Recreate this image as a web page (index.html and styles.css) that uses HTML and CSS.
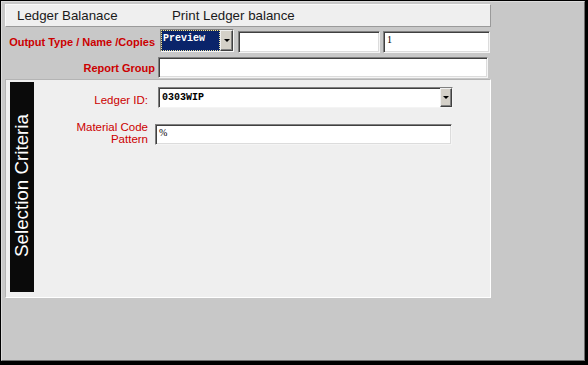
FILE: index.html
```html
<!DOCTYPE html>
<html>
<head>
<meta charset="utf-8">
<link rel="stylesheet" href="styles.css">
</head>
<body>
<div class="window">
  <div class="inner">
    <div class="titlebar">
      <span class="title-main">Ledger Balanace</span>
      <span class="title-sub">Print Ledger balance</span>
    </div>
    <div class="row row-output">
      <div class="lbl">Output Type / Name /Copies</div>
      <div class="combo combo-preview">
        <div class="combo-value focused"><span>Preview</span></div>
        <div class="combo-btn"><i class="arrow"></i></div>
      </div>
      <div class="field field-name"></div>
      <div class="field field-copies"><span>1</span></div>
    </div>
    <div class="row row-group">
      <div class="lbl">Report Group</div>
      <div class="field field-group"></div>
    </div>
    <div class="panel">
      <div class="sidebar"><span>Selection Criteria</span></div>
      <div class="criteria">
        <div class="crow crow-ledger">
          <div class="clbl">Ledger ID:</div>
          <div class="combo combo-ledger">
            <div class="combo-value"><span>0303WIP</span></div>
            <div class="combo-btn"><i class="arrow"></i></div>
          </div>
        </div>
        <div class="crow crow-mat">
          <div class="clbl">Material Code<br>Pattern</div>
          <div class="field field-mat"><span>%</span></div>
        </div>
      </div>
    </div>
  </div>
</div>
</body>
</html>
```
FILE: styles.css
```css
html, body {
  margin: 0;
  padding: 0;
  background: #000;
}
.window {
  width: 588px;
  height: 365px;
  box-sizing: border-box;
  border-style: solid;
  border-color: #000;
  border-width: 1px 3px 4px 1px;
  background: #000;
}
.inner {
  box-sizing: border-box;
  height: 100%;
  background: #c8c8c8;
  border: 1px solid;
  border-color: #dcdcdc #6e6e6e #6e6e6e #dcdcdc;
  font-family: "Liberation Sans", Arial, sans-serif;
  display: flex;
  flex-direction: column;
}
.titlebar {
  box-sizing: border-box;
  margin: 2px 0 0 3px;
  width: 486px;
  height: 23px;
  background: #efefef;
  border: 1px solid;
  border-color: #fafafa #9a9a9a #9a9a9a #fafafa;
  display: flex;
  align-items: center;
  font-size: 13.3px;
  color: #1a1a1a;
  padding: 0 0 1px 11px;
}
.title-main { width: 155px; }
.row {
  display: flex;
  align-items: center;
}
.row-output { margin-top: 2px; height: 24px; }
.row-group { margin-top: 4px; height: 21px; }
.lbl {
  width: 153px;
  text-align: right;
  color: #cc0000;
  font-weight: bold;
  font-size: 11px;
}
.row-output .lbl { padding-top: 2px; }
.row-group .lbl { padding-top: 1px; }
.field {
  box-sizing: border-box;
  background: #fff;
  border: 1px solid;
  border-color: #808080 #f4f4f4 #f4f4f4 #808080;
  box-shadow: inset 1px 1px 0 #404040, inset -1px -1px 0 #dcdcdc;
  font-family: "Liberation Serif", "Times New Roman", serif;
  font-size: 10px;
  color: #000;
  padding: 2px 0 0 3px;
  line-height: 12px;
}
.field-name { margin-left: 4px; width: 142px; height: 22px; align-self: flex-end; }
.field-copies { margin-left: 3px; width: 107px; height: 22px; align-self: flex-end; }
.field-group { margin-left: 3px; width: 330px; height: 21px; }
.combo {
  box-sizing: border-box;
  display: flex;
  border: 1px solid;
  border-color: #808080 #f4f4f4 #f4f4f4 #808080;
  background: #fff;
}
.combo-value {
  flex: 1;
  box-sizing: border-box;
  font-family: "Liberation Mono", "Courier New", monospace;
  font-weight: bold;
  font-size: 10px;
  line-height: 12px;
  padding: 2px 0 0 1px;
  border-top: 1px solid #404040;
  border-left: 1px solid #404040;
  color: #000;
}
.combo-value.focused {
  background: #0a246a;
  color: #fff;
  outline: 1px dotted #e8e0a0;
  outline-offset: -1px;
  padding-top: 2px;
}
.combo-btn {
  width: 11px;
  box-sizing: border-box;
  background: #d4d0c8;
  border: 1px solid;
  border-color: #f0f0f0 #404040 #404040 #f0f0f0;
  box-shadow: inset -1px -1px 0 #808080;
  display: flex;
  align-items: center;
  justify-content: center;
}
.arrow {
  width: 0;
  height: 0;
  border-left: 3px solid transparent;
  border-right: 3px solid transparent;
  border-top: 3px solid #000;
}
.combo-preview { margin-left: 5px; width: 74px; height: 23px; align-self: flex-start; }
.combo-preview .combo-btn { width: 13px; }
.panel {
  box-sizing: border-box;
  margin: 1px 0 0 3px;
  width: 486px;
  height: 219px;
  background: #efefef;
  border: 1px solid;
  border-color: #b4b4b4 #fff #fff #b4b4b4;
  padding: 2px 0 5px 4px;
  display: flex;
}
.sidebar {
  width: 24px;
  height: 210px;
  background: #0a0a0a;
  color: #fff;
  display: flex;
  align-items: center;
  justify-content: center;
  padding-bottom: 2px;
  box-sizing: border-box;
}
.sidebar span {
  writing-mode: vertical-rl;
  transform: rotate(180deg);
  font-size: 18.8px;
  white-space: nowrap;
}
.criteria {
  padding-top: 5px;
}
.crow { display: flex; }
.crow-ledger { align-items: center; height: 21px; }
.crow-mat { align-items: flex-end; margin-top: 13px; }
.clbl {
  width: 114px;
  text-align: right;
  color: #cc0000;
  font-size: 11.5px;
  line-height: 12px;
}
.crow-ledger .clbl { padding-top: 5px; }
.combo-ledger { margin-left: 10px; width: 295px; height: 21px; }
.combo-ledger .combo-value { padding-top: 3px; padding-left: 2px; }
.combo-ledger .combo-btn { width: 12px; }
.field-mat { margin-left: 7px; width: 297px; height: 21px; }
```
